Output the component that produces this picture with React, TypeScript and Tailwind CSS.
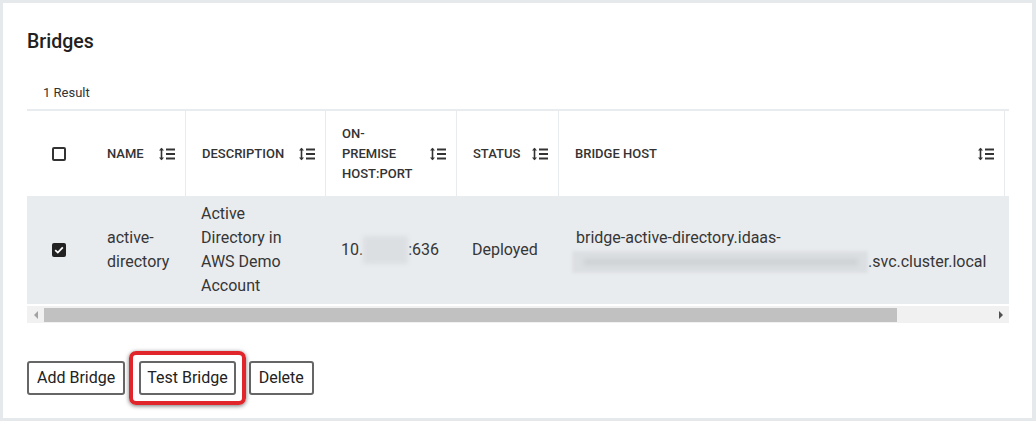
import React from "react";

function SortIcon() {
  return (
    <svg width="18" height="14" viewBox="0 0 18 14" className="shrink-0 text-[#333]">
      <line x1="3.5" y1="1.5" x2="3.5" y2="12.5" stroke="currentColor" strokeWidth="1.6" />
      <path d="M1 3.5 L3.5 0.8 L6 3.5 Z" fill="currentColor" />
      <path d="M1 10.5 L3.5 13.2 L6 10.5 Z" fill="currentColor" />
      <line x1="8" y1="2.5" x2="17" y2="2.5" stroke="currentColor" strokeWidth="2" />
      <line x1="8" y1="7" x2="17" y2="7" stroke="currentColor" strokeWidth="2" />
      <line x1="8" y1="11.5" x2="17" y2="11.5" stroke="currentColor" strokeWidth="2" />
    </svg>
  );
}

function HeadCell({
  children,
  sort = true,
  first = false,
}: {
  children: React.ReactNode;
  sort?: boolean;
  first?: boolean;
}) {
  return (
    <div
      className={
        "flex items-center justify-between pl-4 pr-[9px] " +
        (first ? "" : "border-l border-[#e9ecef]")
      }
    >
      <div className="text-[13px] font-medium leading-[20px] text-[#333] uppercase">{children}</div>
      {sort && <SortIcon />}
    </div>
  );
}

export default function App() {
  return (
    <div className="w-[1036px] h-[421px] bg-[#e6e9ec] p-[3px] font-['Roboto',sans-serif]">
      <div className="w-[1029px] h-[415px] bg-white pl-[24px] pt-[27px]">
        <div className="text-[19.5px] font-medium leading-[24px] text-[#212121]">Bridges</div>
        <div className="pl-4 mt-[31px] text-[13px] leading-[16px] text-[#333]">1 Result</div>

        <div className="mt-[8px] w-[982px]">
          <div className="overflow-hidden w-[982px] border-t-2 border-[#e9ecef]">
            <div className="w-[1100px]">
              {/* header */}
              <div className="grid grid-cols-[64px_94px_140px_131px_102px_446px_123px] h-[85px]">
                <div className="flex items-center justify-center">
                  <div className="w-[14px] h-[14px] border-2 border-[#333] rounded-[2px]" />
                </div>
                <HeadCell first>Name</HeadCell>
                <HeadCell>Description</HeadCell>
                <HeadCell>
                  <div>ON-</div>
                  <div>PREMISE</div>
                  <div>HOST:PORT</div>
                </HeadCell>
                <HeadCell>Status</HeadCell>
                <HeadCell>Bridge Host</HeadCell>
                <div className="border-l border-[#e9ecef]" />
              </div>
              {/* body row */}
              <div className="grid grid-cols-[64px_94px_140px_131px_102px_446px_123px] h-[108px] bg-[#e9ecef] text-[16px] leading-[24px] text-[#363636]">
                <div className="flex items-center justify-center">
                  <div className="w-[14px] h-[14px] bg-[#222] rounded-[2px] flex items-center justify-center">
                    <svg width="10" height="8" viewBox="0 0 10 8">
                      <path d="M1.2 4.2 L3.8 6.6 L8.8 1.4" fill="none" stroke="white" strokeWidth="1.8" />
                    </svg>
                  </div>
                </div>
                <div className="flex flex-col justify-center pl-4">
                  <div>active-</div>
                  <div>directory</div>
                </div>
                <div className="flex flex-col justify-center pl-4">
                  <div>Active</div>
                  <div>Directory in</div>
                  <div>AWS Demo</div>
                  <div>Account</div>
                </div>
                <div className="flex items-center pl-4">
                  <span>10.</span>
                  <span className="inline-block w-[45px] h-[28px] bg-[#dcdfe2] blur-[2px] rounded-[2px]" />
                  <span>:636</span>
                </div>
                <div className="flex items-center pl-4">Deployed</div>
                <div className="flex flex-col justify-center pl-[18px]">
                  <div>bridge-active-directory.idaas-</div>
                  <div className="flex items-center -ml-[4px]">
                    <span className="relative inline-block w-[296px] h-[22px] bg-[#dcdfe2] blur-[1.5px] rounded-[2px]">
                      <span className="absolute left-[12px] right-[10px] top-[8px] h-[6px] bg-[#cdd0d3] blur-[2px]" />
                    </span>
                    <span>.svc.cluster.local</span>
                  </div>
                </div>
                <div />
              </div>
            </div>
          </div>
          {/* scrollbar */}
          <div className="mt-[2px] h-[17px] bg-[#f1f1f1] flex items-center">
            <div className="w-[17px] flex items-center justify-center">
              <div className="w-0 h-0 border-y-[4px] border-y-transparent border-r-[4px] border-r-[#a3a3a3]" />
            </div>
            <div className="h-[14px] w-[853px] bg-[#c1c1c1]" />
            <div className="flex-1" />
            <div className="w-[17px] flex items-center justify-center">
              <div className="w-0 h-0 border-y-[4px] border-y-transparent border-l-[4px] border-l-[#505050]" />
            </div>
          </div>
        </div>

        <div className="mt-[38px] flex items-center">
          <button className="h-[34px] px-[8px] border-2 border-[#666] rounded-[3px] bg-white text-[16px] text-[#222]">
            Add Bridge
          </button>
          <div className="relative ml-[14px]">
            <div className="absolute -inset-[10px] rounded-[7px] border-[4px] border-[#e0262b] shadow-[0_1px_4px_rgba(0,0,0,0.55)]" />
            <button className="relative h-[34px] px-[6px] border-2 border-[#666] rounded-[3px] bg-white text-[16px] text-[#222]">
              Test Bridge
            </button>
          </div>
          <button className="ml-[13px] h-[34px] px-[8px] border-2 border-[#666] rounded-[3px] bg-white text-[16px] text-[#222]">
            Delete
          </button>
        </div>
      </div>
    </div>
  );
}
